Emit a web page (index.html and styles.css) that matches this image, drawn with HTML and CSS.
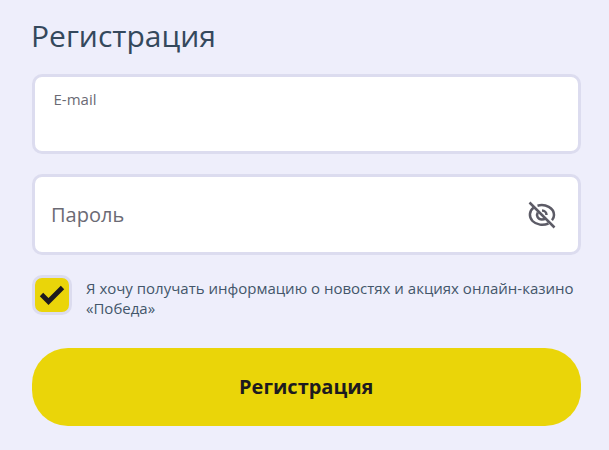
FILE: index.html
```html
<!DOCTYPE html>
<html lang="ru">
<head>
    <meta charset="UTF-8">
    <meta name="viewport" content="width=device-width, initial-scale=1.0">
    <title>Регистрация</title>
    <link rel="stylesheet" href="styles.css">
</head>
<body>
    <form class="form">
        <h1 class="title">Регистрация</h1>
        <label class="field field-active">
            <span class="field-label">E-mail</span>
            <input class="field-input" type="email">
        </label>
        <div class="field field-password">
            <input class="field-input" type="password" placeholder="Пароль">
            <button class="eye" type="button">
                <svg width="28" height="28" viewBox="0 0 28 28" fill="none" stroke="#5c5b66" stroke-width="2.5">
                    <path d="M9.500 4.700C17.500 2.500 26 7 26 14c0 2-.7 3.700-2 5.200"/>
                    <path d="M5.500 6.800C1 10 .8 16.200 4.500 20c4 4 10.500 4.800 16 2.500"/>
                    <path d="M9.800 11.500c-2 3.300.2 7 4 7 1.500 0 2.700-.4 3.700-1.300"/>
                    <path d="M14 9.500c2.500 0 4.500 2 4.500 4.500"/>
                    <path d="M1.500 1.500L26.500 26.500"/>
                </svg>
            </button>
        </div>
        <label class="agree">
            <input class="agree-input" type="checkbox" checked>
            <span class="agree-box">
                <svg width="26" height="22" viewBox="0 0 26 22" fill="none" stroke="#1d1a1f" stroke-width="4.800">
                    <path d="M2.500 10.500L9.500 17.500L23.500 3.500"/>
                </svg>
            </span>
            <span class="agree-text">Я хочу получать информацию о новостях и акциях онлайн-казино «Победа»</span>
        </label>
        <button class="submit" type="submit">Регистрация</button>
    </form>
</body>
</html>
```
FILE: styles.css
```css
* {
    box-sizing: border-box;
}

body {
    margin: 0;
    background-color: #eeeefb;
    font-family: "Open Sans", "Noto Sans", sans-serif;
    color: #34485c;
}

.form {
    width: 609px;
    height: 450px;
    padding: 16px 28px 0 31.5px;
}

.title {
    margin: 0 0 18px -0.5px;
    font-size: 30px;
    line-height: 40px;
    font-weight: 400;
}

.field {
    display: flex;
    align-items: center;
    height: 80px;
    margin-bottom: 20px;
    padding: 0 22px 0 16.5px;
    background-color: #fff;
    border: 3px solid #dcdcef;
    border-radius: 10px;
}

.field-active {
    flex-direction: column;
    align-items: flex-start;
    padding: 12px 19px 0;
}

.field-password {
    height: 81px;
}

.field-label {
    font-size: 15px;
    line-height: 21px;
    color: #6b6a74;
}

.field-input {
    flex: 1;
    width: 100%;
    min-width: 0;
    padding: 0;
    border: none;
    outline: none;
    background: none;
    font-family: inherit;
    font-size: 20px;
    color: #34485c;
}

.field-input::placeholder {
    color: #6b6a74;
    opacity: 1;
}

.eye {
    display: flex;
    padding: 0;
    border: none;
    background: none;
    cursor: pointer;
}

.agree {
    display: flex;
    align-items: flex-start;
    margin-bottom: 30px;
    cursor: pointer;
}

.agree-input {
    display: none;
}

.agree-box {
    display: flex;
    flex: none;
    align-items: center;
    justify-content: center;
    width: 40px;
    height: 40px;
    margin-right: 14.5px;
    background-color: #ead509;
    border: 3px solid #dcdcef;
    border-radius: 10px;
}

.agree-text {
    padding-top: 3px;
    font-size: 15px;
    line-height: 20px;
    color: #43566a;
}

.submit {
    display: block;
    width: 100%;
    height: 78px;
    padding: 0 0 2px;
    border: none;
    border-radius: 36px;
    background-color: #ead509;
    font-family: inherit;
    font-size: 20px;
    font-weight: 700;
    color: #1d1a1f;
    cursor: pointer;
}
```
